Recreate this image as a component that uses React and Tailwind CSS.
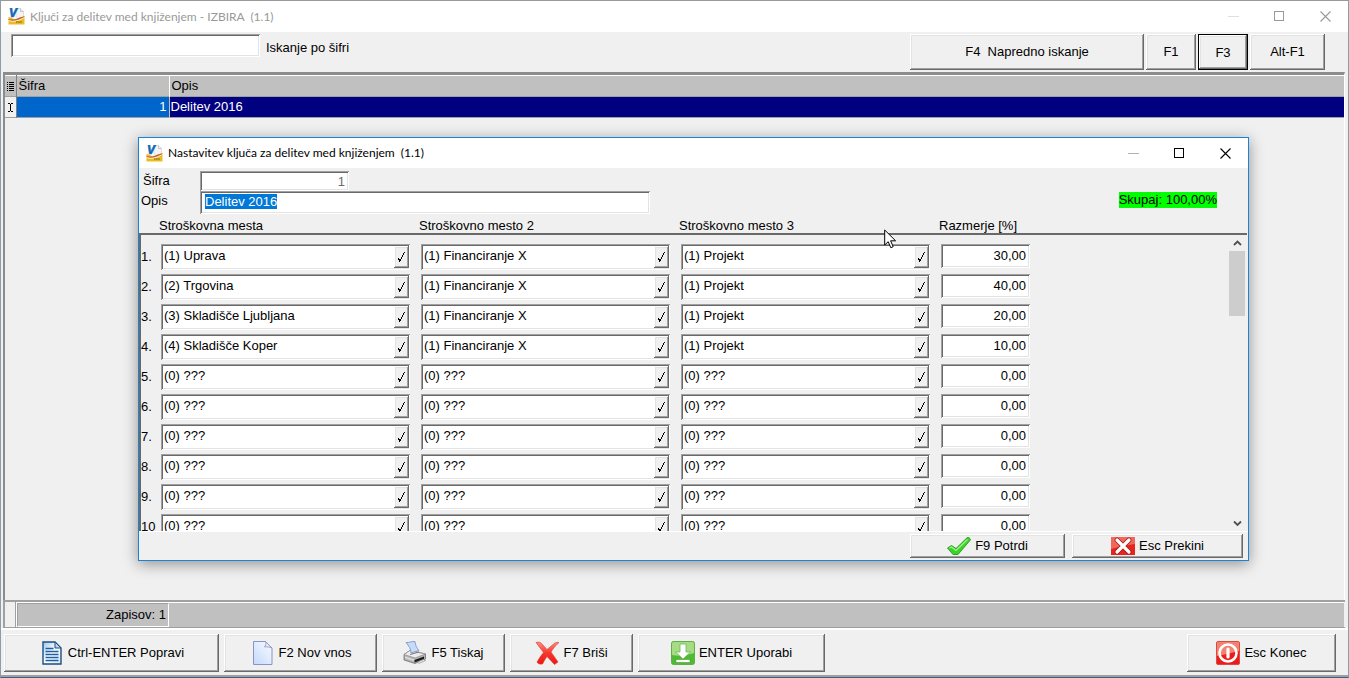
import { useEffect, useRef } from 'react'
import clsx from 'clsx'

const RAISED =
  'shadow-[inset_-1px_-1px_#696969,inset_1px_1px_#ffffff,inset_-2px_-2px_#a0a0a0,inset_2px_2px_#e3e3e3]'
const SUNKEN =
  'shadow-[inset_1px_1px_#a0a0a0,inset_-1px_-1px_#ffffff,inset_2px_2px_#696969,inset_-2px_-2px_#e3e3e3]'

const PLACES = ['(1) Uprava', '(2) Trgovina', '(3) Skladišče Ljubljana', '(4) Skladišče Koper']
const RATIOS = ['30,00', '40,00', '20,00', '10,00']

const ROWS = Array.from({ length: 10 }, (_, i) => {
  const filled = i < PLACES.length
  return {
    no: i < 9 ? `${i + 1}.` : `${i + 1}`,
    place: filled ? PLACES[i] : '(0) ???',
    place2: filled ? '(1) Financiranje X' : '(0) ???',
    place3: filled ? '(1) Projekt' : '(0) ???',
    ratio: filled ? RATIOS[i] : '0,00',
  }
})

function AppIcon() {
  return (
    <svg width="17" height="17" viewBox="0 0 17 17" className="shrink-0" aria-hidden="true">
      <path d="M8 .5h4.500l3 3V12H8z" fill="#f3f3f3" stroke="#d4d4d4" strokeWidth="0.7" />
      <path d="M12.500 .5v3h3" fill="none" stroke="#b5b5b5" strokeWidth="0.7" />
      <path d="M.5 9c2.500 0 4 2 6.500 2 3.500 0 5-2.500 9.500-2.500v8H.5z" fill="#e9bd20" />
      <path d="M.5 11.500c4 1.500 9 .5 16-3v1.200c-6 4-11 4.800-16 3.300z" fill="#fff8dc" />
      <path d="M.5 11c4 1.200 8 .5 10-1l6-1.800v.8c-6 3.400-11 4.500-16 3z" fill="#c9543a" />
      <path d="M8 14h6" stroke="#8c7a1c" strokeWidth="1.600" strokeDasharray="1.500 .6" />
      <text x="1" y="9" fontSize="12" fontWeight="700" fontStyle="italic" fill="#0f67b8" stroke="#0f67b8" strokeWidth="0.6" fontFamily="Liberation Sans, sans-serif">
        V
      </text>
    </svg>
  )
}

function DocumentIcon() {
  return (
    <svg width="20" height="24" viewBox="2 0 20 24" className="mr-[2px] ml-[3px]" aria-hidden="true">
      <defs>
        <linearGradient id="doc" x1="0" y1="0" x2="1" y2="1">
          <stop offset="0" stopColor="#9cc8ea" />
          <stop offset="0.5" stopColor="#ffffff" />
          <stop offset="1" stopColor="#cfe5f6" />
        </linearGradient>
      </defs>
      <path d="M3 1h12l6 6v16H3z" fill="url(#doc)" stroke="#1d4f80" strokeWidth="1.400" />
      <path d="M15 1v6h6z" fill="#b9d8ef" stroke="#1d4f80" />
      <path d="M5.500 7.500h8M5.500 10.500h13M5.500 13.500h13M5.500 16.500h13M5.500 19.500h13" stroke="#1d5fa5" strokeWidth="1.300" />
    </svg>
  )
}

function NewPageIcon() {
  return (
    <svg width="20" height="24" viewBox="2 0 20 24" className="mr-[2px] ml-[3px]" aria-hidden="true">
      <defs>
        <linearGradient id="page" x1="0" y1="1" x2="1" y2="0">
          <stop offset="0" stopColor="#c3d9fb" />
          <stop offset="1" stopColor="#fafcff" />
        </linearGradient>
      </defs>
      <path d="M2.500 .5h12l6.500 6.500v16.500H2.500z" fill="url(#page)" stroke="#8a93c4" />
      <path d="M14.500 .5c1 2 0 4-1 5.500 2-.5 5 0 7.500 1z" fill="#dfeafc" stroke="#8a93c4" strokeWidth="0.8" />
    </svg>
  )
}

function PrinterIcon() {
  return (
    <svg width="24" height="24" viewBox="0 0 24 24" aria-hidden="true">
      <path d="M1 13.500l6-4 15.500 3.500v5L12 22.500 1 19z" fill="#b4b4b4" stroke="#6e6e6e" strokeWidth="0.8" />
      <path d="M1 13.500l6-4 15.500 3.500L12 17z" fill="#ececec" stroke="#8a8a8a" strokeWidth="0.7" />
      <path d="M3 1.500c3 .5 6-1.500 9-1 .5 4 1.500 6 4 9l-8 2.500C8 8 6 5 3 1.500z" fill="#c4dcfa" stroke="#8295cc" strokeWidth="0.9" />
      <path d="M7 13.500l9-2.500" stroke="#777" strokeWidth="1" />
      <path d="M11.500 19l9.500-3.500V18l-9.500 3.500z" fill="#1c1c1c" />
      <path d="M2 15.500l9 3v1.500l-9-3z" fill="#dedede" />
      <path d="M14 21.200l6.500-2.700 2 1-6.500 2.800z" fill="#f3f3f3" stroke="#777" strokeWidth="0.6" />
    </svg>
  )
}

function DeleteIcon() {
  return (
    <svg width="24" height="24" viewBox="0 0 24 24" aria-hidden="true">
      <defs>
        <linearGradient id="del" x1="0" y1="0" x2="0" y2="1">
          <stop offset="0" stopColor="#ff8d7d" />
          <stop offset="0.5" stopColor="#f5362c" />
          <stop offset="1" stopColor="#f01410" />
        </linearGradient>
      </defs>
      <path
        d="M1 1.500c3-1 5 0 6.500 2L12 8.500l6-5C20 1.500 22 1 24 1.500c-3 2.500-6 6-8 9.500l7 10-3.500 2.500L12 15.500c-2 2.500-3 5-4.500 7.500-3 .5-5-.5-5.500-2 2-3.500 4-6.500 6.500-9.500z"
        fill="url(#del)"
        stroke="#dc3a32"
        strokeWidth="0.6"
      />
    </svg>
  )
}

function DownloadIcon() {
  return (
    <svg width="24" height="24" viewBox="0 0 24 24" aria-hidden="true">
      <rect x="0.500" y="0.500" width="23" height="23" rx="2" fill="#4fbb34" stroke="#5fae48" />
      <path d="M1 2.500Q1 1 2.500 1h19Q23 1 23 2.500V12Q12 16 1 14z" fill="#a5dc84" />
      <path d="M9 3h6v8h4.500L12 18 4.500 11H9z" fill="#fff" stroke="#6fb558" strokeWidth="0.8" />
      <rect x="5" y="18.500" width="14" height="3" fill="#fff" stroke="#4a9c34" strokeWidth="0.6" />
    </svg>
  )
}

function PowerIcon() {
  return (
    <svg width="24" height="24" viewBox="0 0 24 24" aria-hidden="true">
      <rect x="0.500" y="0.500" width="23" height="23" rx="1.500" fill="#ea1c1c" stroke="#dc4a40" />
      <path d="M1 1h22v9Q12 13 1 15z" fill="#f58173" />
      <circle cx="12" cy="12" r="8.500" fill="none" stroke="#fff" strokeWidth="2.600" />
      <path d="M12 8v8" stroke="#fff" strokeWidth="3.200" strokeLinecap="round" />
    </svg>
  )
}

function ConfirmIcon() {
  return (
    <svg width="24" height="18" viewBox="0 0 24 18" aria-hidden="true">
      <path d="M.5 11l4-2.500 4.500 3L20 .8c1.500-.8 3 .2 3.500 2L11 17.500H6z" fill="#3ed12c" stroke="#1f9c18" strokeWidth="0.9" />
      <path d="M2.500 11l2-1 4.500 3.500L20.500 2.500" fill="none" stroke="#a4f08c" strokeWidth="1.200" />
    </svg>
  )
}

function CancelIcon() {
  return (
    <svg width="24" height="18" viewBox="0 0 24 18" aria-hidden="true">
      <rect width="24" height="18" fill="#e8241f" />
      <path d="M0 0h24v7Q12 8 0 12z" fill="#f0675c" />
      <path d="M6 3l12 12M18 3L6 15" stroke="#9f1612" strokeWidth="4.600" strokeLinecap="round" />
      <path d="M6 3l12 12M18 3L6 15" stroke="#fff" strokeWidth="3.200" strokeLinecap="round" />
    </svg>
  )
}

function Button({ className, icon, children, ...rest }) {
  return (
    <button
      type="button"
      className={clsx('flex items-center justify-center gap-1 whitespace-pre bg-[#f0f0f0]', className)}
      {...rest}
    >
      {icon}
      {children}
    </button>
  )
}

function TitleBar({ title, className }) {
  return (
    <div
      className={clsx(
        "flex shrink-0 items-center justify-between bg-white font-['Lato','Open_Sans',sans-serif] text-xs",
        className,
      )}
    >
      <div className="flex items-center gap-[5px] whitespace-pre">
        <AppIcon />
        <h1>{title}</h1>
      </div>
      <div className="flex items-center">
        <button type="button" aria-label="Minimiraj" className="flex w-[46px] justify-center opacity-30" disabled>
          <svg width="11" height="11" viewBox="0 0 11 11">
            <path d="M0 5.500h11" stroke="currentColor" />
          </svg>
        </button>
        <button type="button" aria-label="Maksimiraj" className="flex w-[46px] justify-center">
          <svg width="11" height="11" viewBox="0 0 11 11">
            <rect x="0.500" y="0.500" width="9" height="9" fill="none" stroke="currentColor" />
          </svg>
        </button>
        <button type="button" aria-label="Zapri" className="flex w-[46px] justify-center">
          <svg width="11" height="11" viewBox="0 0 11 11">
            <path d="M.5 .5l10 10M10.500 .5l-10 10" stroke="currentColor" strokeWidth="1.100" />
          </svg>
        </button>
      </div>
    </div>
  )
}

function LookupField({ label, value }) {
  return (
    <div className={clsx('flex h-[26px] w-[249px] bg-white py-[2px] pr-px pl-[2px]', SUNKEN)}>
      <input aria-label={label} defaultValue={value} className="min-w-0 flex-1 bg-transparent pb-[2px] pl-px outline-none" />
      <button
        type="button"
        aria-label={`${label} - izberi`}
        className={clsx('flex w-[15px] items-center justify-center bg-[#f0f0f0]', RAISED)}
      >
        <svg width="9" height="11" viewBox="0 0 9 11">
          <path d="M1.500 6v2M2.500 7v3M3.500 7v2M4.500 5v2M5.500 3v2M6.500 1v2M7.500 0v1" stroke="#000" />
        </svg>
      </button>
    </div>
  )
}

function SplitDialog() {
  const nameRef = useRef(null)

  useEffect(() => {
    nameRef.current?.focus()
    nameRef.current?.select()
  }, [])

  return (
    <section
      role="dialog"
      aria-label="Nastavitev ključa za delitev med knjiženjem"
      className="absolute top-[136px] right-[99px] bottom-[116px] left-[137px] flex flex-col border border-[#1883d7] bg-[#f0f0f0] shadow-[0_3px_14px_rgba(0,0,0,0.4)]"
    >
      <TitleBar title="Nastavitev ključa za delitev med knjiženjem  (1.1)" className="h-[30px] pl-[7px] text-black" />

      <div className="flex items-start justify-between pt-[3px] pr-[31px] pl-[2px]">
        <div className="flex flex-col">
          <div className="flex h-5 items-center">
            <label htmlFor="code" className="w-[59px] pl-[2px]">
              Šifra
            </label>
            <input
              id="code"
              defaultValue="1"
              readOnly
              className={clsx('h-5 w-[149px] bg-white pr-1 text-right text-[#6d6d6d] outline-none', SUNKEN)}
            />
          </div>
          <div className="flex h-[23px] items-center">
            <label htmlFor="name" className="w-[59px] pb-1">
              Opis
            </label>
            <input
              id="name"
              ref={nameRef}
              defaultValue="Delitev 2016"
              className={clsx(
                'h-[23px] w-[450px] bg-white pb-[2px] pl-[5px] leading-4 outline-none selection:bg-[#0078d7] selection:text-white',
                SUNKEN,
              )}
            />
          </div>
        </div>
        <output className="mt-[21px] bg-[#00ff00] leading-4">Skupaj: 100,00%</output>
      </div>

      <div className="flex h-[19px] shrink-0 items-center gap-[11px] pt-1 pl-5">
        <div className="w-[249px]">Stroškovna mesta</div>
        <div className="w-[249px]">Stroškovno mesto 2</div>
        <div className="w-[249px]">Stroškovno mesto 3</div>
        <div>Razmerje [%]</div>
      </div>

      <div className="mr-px flex min-h-0 flex-1 border-t-2 border-l-2 border-t-[#696969] border-l-[#696969]">
        <div className="flex min-w-0 flex-1 flex-col gap-1 overflow-hidden pt-[9px]">
          {ROWS.map((row) => (
            <div key={row.no} className="flex shrink-0 gap-[11px]">
              <span className="-mr-[11px] w-5 pt-[5px]">{row.no}</span>
              <LookupField label={`Stroškovna mesta ${row.no}`} value={row.place} />
              <LookupField label={`Stroškovno mesto 2 ${row.no}`} value={row.place2} />
              <LookupField label={`Stroškovno mesto 3 ${row.no}`} value={row.place3} />
              <input
                aria-label={`Razmerje ${row.no}`}
                defaultValue={row.ratio}
                className={clsx('h-6 w-[89px] bg-white pr-1 pb-[2px] text-right outline-none', SUNKEN)}
              />
            </div>
          ))}
        </div>
        <div className="mr-[2px] flex w-4 flex-col text-[#505050]">
          <button type="button" aria-label="Gor" className="flex h-4 items-center justify-center">
            <svg width="9" height="7" viewBox="0 0 9 7">
              <path d="M1 5l3.500-3.500L8 5" fill="none" stroke="currentColor" strokeWidth="1.800" />
            </svg>
          </button>
          <div className="h-[65px] bg-[#cdcdcd]" />
          <button type="button" aria-label="Dol" className="mt-auto flex h-4 items-center justify-center">
            <svg width="9" height="7" viewBox="0 0 9 7">
              <path d="M1 1.500L4.500 5 8 1.500" fill="none" stroke="currentColor" strokeWidth="1.800" />
            </svg>
          </button>
        </div>
      </div>

      <div className="flex shrink-0 justify-end gap-[7px] border-t border-white pt-[2px] pr-[5px] pb-[2px]">
        <Button className={clsx('h-6 w-[155px]', RAISED)} icon={<ConfirmIcon />}>
          F9 Potrdi
        </Button>
        <Button className={clsx('h-6 w-[171px]', RAISED)} icon={<CancelIcon />}>
          Esc Prekini
        </Button>
      </div>
    </section>
  )
}

export default function App() {
  return (
    <div className="relative flex min-h-screen flex-col border border-t-[#999999] border-r-[#8f9ba6] border-b-[#3a6286] border-l-[#8f9ba6] bg-[#f0f0f0] font-['Liberation_Sans',Arial,sans-serif] text-[13px] leading-4 text-black">
      <TitleBar title="Ključi za delitev med knjiženjem - IZBIRA  (1.1)" className="h-[31px] pl-[7px] text-[#999999]" />

      <header className="flex h-10 shrink-0 items-start justify-between pr-[23px] pl-[10px]">
        <div className="flex items-center gap-[6px] pt-[2px]">
          <input id="search" className={clsx('h-[23px] w-[249px] bg-white px-1 outline-none', SUNKEN)} />
          <label htmlFor="search" className="pt-1">
            Iskanje po šifri
          </label>
        </div>
        <div className="flex gap-[2px] pt-[2px]">
          <Button className={clsx('h-9 w-[234px]', RAISED)}>{'F4  Napredno iskanje'}</Button>
          <Button className={clsx('h-9 w-[50px]', RAISED)}>F1</Button>
          <Button className={clsx('h-9 w-[50px] border border-black pt-px', RAISED)}>F3</Button>
          <Button className={clsx('h-9 w-[75px]', RAISED)}>Alt-F1</Button>
        </div>
      </header>

      <main className="mr-[3px] ml-[2px] flex flex-1 flex-col border-t-[3px] border-r border-l-2 border-t-[#8c8c8c] border-r-white border-l-[#8c8c8c]">
        <table className="w-full table-fixed border-collapse text-left">
          <thead>
            <tr className="h-[21px] border-t border-t-white bg-[#c0c0c0]">
              <th className="w-[11px] border-r border-[#808080] p-0 font-normal">
                <svg width="9" height="11" viewBox="0 0 9 11" className="mx-auto" aria-hidden="true">
                  <path d="M1 1.500h1M3 1.500h5M1 3.500h1M3 3.500h5M1 5.500h1M3 5.500h5M1 7.500h1M3 7.500h5M1 9.500h1M3 9.500h5" stroke="#000" />
                </svg>
              </th>
              <th className="w-[153px] border-r border-white p-0 pl-[2px] font-normal">Šifra</th>
              <th className="p-0 pl-[2px] font-normal">Opis</th>
            </tr>
          </thead>
          <tbody>
            <tr className="h-[21px] border-y border-[#a0a0a0] bg-[#000080] text-white">
              <td className="border-r border-[#808080] bg-[#f0f0f0] p-0">
                <svg width="7" height="11" viewBox="0 0 7 11" className="mx-auto" aria-hidden="true">
                  <path d="M1 1.500h2M4 1.500h2M3.500 2v7M1 9.500h2M4 9.500h2" stroke="#000" />
                </svg>
              </td>
              <td className="border-r border-[#c0c0c0] bg-[#0066cc] p-0 pr-[2px] text-right">1</td>
              <td className="p-0 pl-px">Delitev 2016</td>
            </tr>
          </tbody>
        </table>
      </main>

      <div className="mr-[3px] ml-[2px] flex h-7 shrink-0 border-t-2 border-b border-l-2 border-[#a0a0a0] pr-px">
        <div className="w-[11px] border-r border-[#a0a0a0]" />
        <div className="flex flex-1 border-t border-l border-white bg-[#c0c0c0]">
          <div className="flex w-[152px] items-center justify-end border border-t-[#a0a0a0] border-r-white border-b-white border-l-[#a0a0a0] pr-[2px]">
            Zapisov: 1
          </div>
        </div>
      </div>

      <footer className="flex h-[49px] shrink-0 items-start gap-[5px] border-t-2 border-b-2 border-t-white border-b-[#a0a0a0] pt-1 pr-3 pl-[3px]">
        <Button className={clsx('h-[38px] w-[215px]', RAISED)} icon={<DocumentIcon />}>
          Ctrl-ENTER Popravi
        </Button>
        <Button className={clsx('h-[38px] w-[153px]', RAISED)} icon={<NewPageIcon />}>
          F2 Nov vnos
        </Button>
        <Button className={clsx('h-[38px] w-[123px]', RAISED)} icon={<PrinterIcon />}>
          F5 Tiskaj
        </Button>
        <Button className={clsx('h-[38px] w-[123px]', RAISED)} icon={<DeleteIcon />}>
          F7 Briši
        </Button>
        <Button className={clsx('h-[38px] w-[187px]', RAISED)} icon={<DownloadIcon />}>
          ENTER Uporabi
        </Button>
        <Button className={clsx('ml-auto h-[38px] w-[149px]', RAISED)} icon={<PowerIcon />}>
          Esc Konec
        </Button>
      </footer>

      <SplitDialog />

      <svg
        width="13"
        height="20"
        viewBox="0 0 13 20"
        className="pointer-events-none absolute top-[228px] left-[883px]"
        aria-hidden="true"
      >
        <path d="M.7 1v15l3.500-3.300 2.600 6 2.400-1-2.600-5.900h5z" fill="#fff" stroke="#000" />
      </svg>
    </div>
  )
}
